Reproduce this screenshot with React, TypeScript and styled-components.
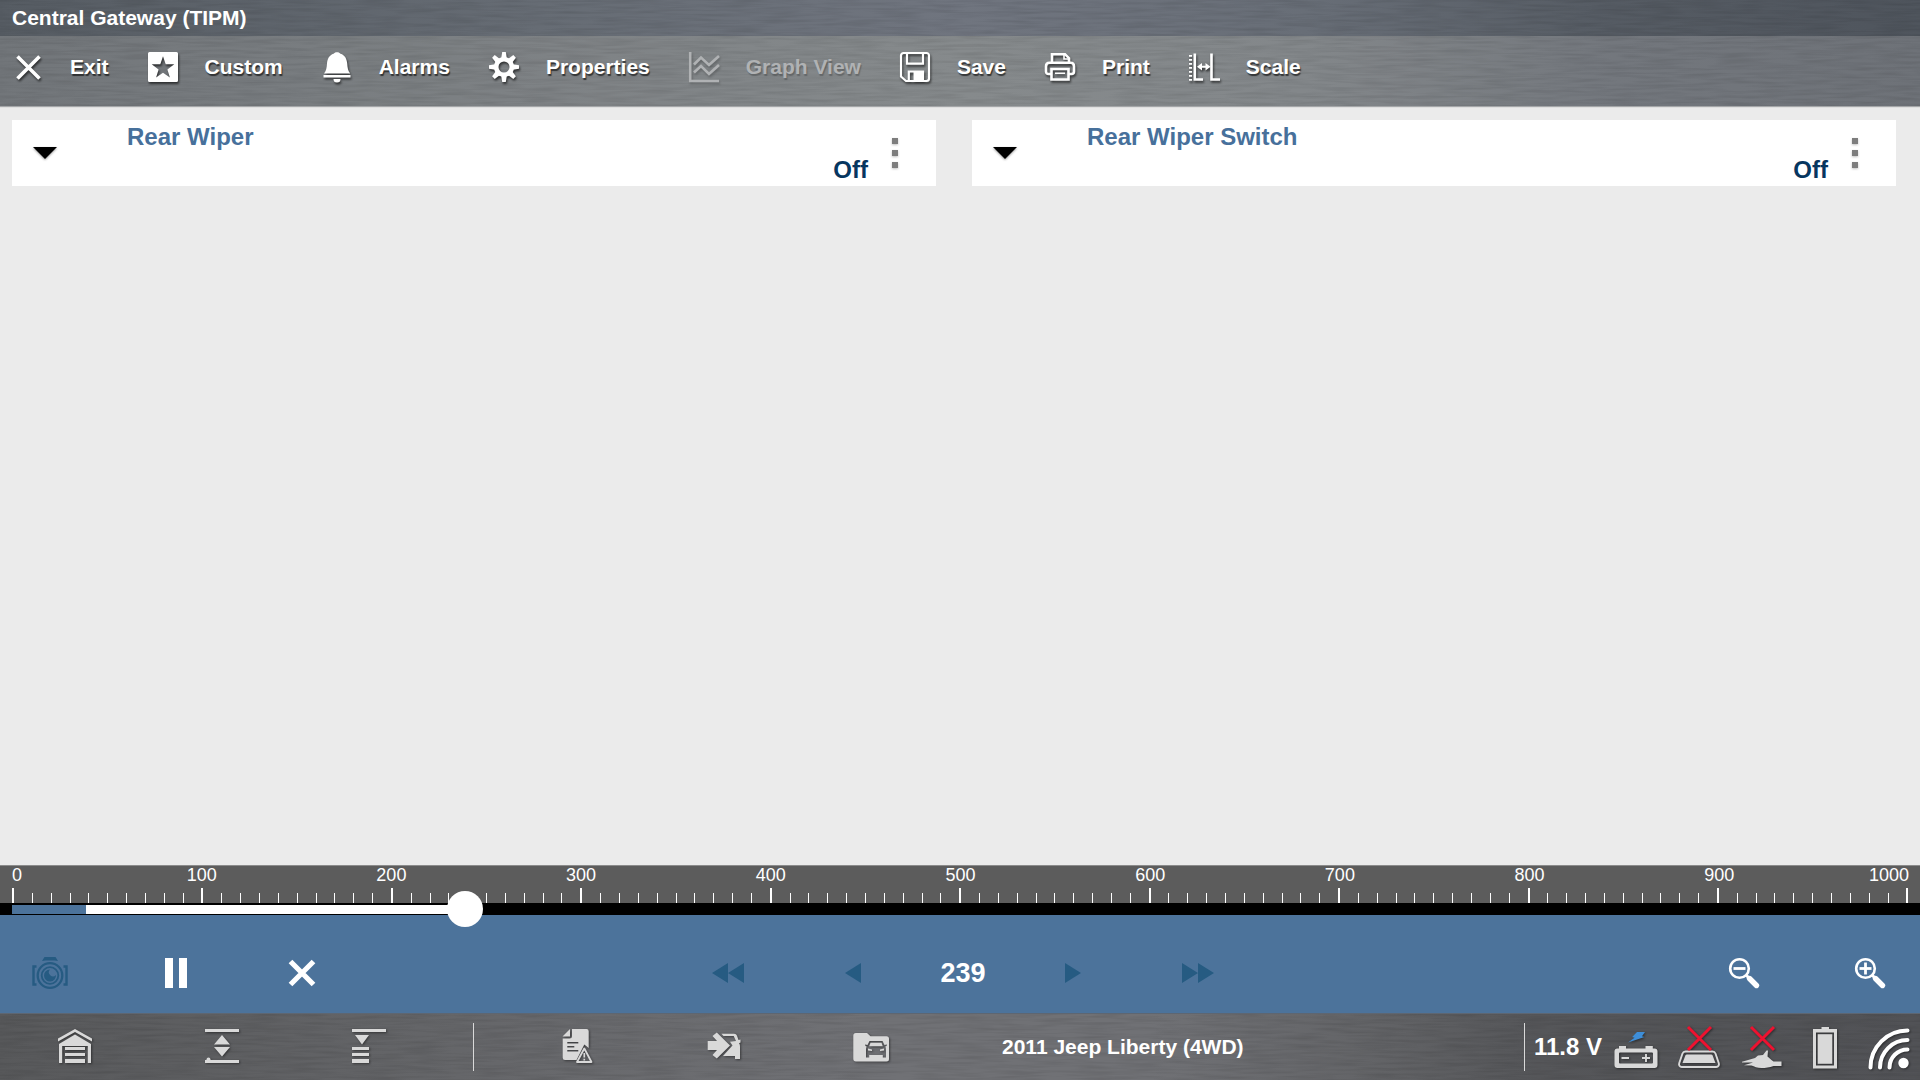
import React, { useState } from "react";
import styled, { createGlobalStyle, css } from "styled-components";

const GlobalStyle = createGlobalStyle`
  *, *::before, *::after { box-sizing: border-box; }
  html, body { margin: 0; padding: 0; }
  body {
    background: #ebebeb;
    font-family: "Liberation Sans", Arial, Helvetica, sans-serif;
    overflow-x: hidden;
  }
  button {
    font: inherit;
    color: inherit;
    background: none;
    border: 0;
    padding: 0;
    margin: 0;
    cursor: pointer;
  }
  svg { display: block; flex: none; overflow: visible; }
`;

const Page = styled.div`
  display: flex;
  flex-direction: column;
  min-height: 100vh;
  overflow: hidden;
`;

/* ---------- brushed metal ---------- */

const Grain = styled.svg`
  position: absolute;
  inset: 0;
  width: 100%;
  height: 100%;
  pointer-events: none;
`;

function Brushed({ id, seed }: { id: string; seed: number }) {
  return (
    <Grain aria-hidden="true">
      <filter id={id} x="0" y="0" width="100%" height="100%">
        <feTurbulence type="fractalNoise" baseFrequency="0.025 0.35" numOctaves={2} seed={seed} />
        <feColorMatrix values="0 0 0 0 0  0 0 0 0 0  0 0 0 0 0  1.6 0 0 0 -0.6" />
      </filter>
      <rect width="100%" height="100%" filter={`url(#${id})`} opacity="0.11" />
    </Grain>
  );
}

/* ---------- header ---------- */

const TitleBar = styled.header`
  position: relative;
  display: flex;
  align-items: center;
  height: 36px;
  padding: 0 12px;
  background: linear-gradient(90deg, #565c63 0%, #666c74 28%, #70757f 50%, #686e77 68%, #555b63 84%, #4f555d 100%);
`;

const Title = styled.h1`
  position: relative;
  margin: 0;
  font-size: 21px;
  line-height: 24px;
  font-weight: bold;
  color: #fff;
`;

const Toolbar = styled.nav`
  position: relative;
  display: flex;
  gap: 39px;
  height: 70px;
  padding: 0 13px 8px;
  background: linear-gradient(90deg, #72767a 0%, #7d8184 26%, #868a8c 50%, #83878a 68%, #73777d 84%, #6e7278 100%);
  box-shadow: 0 1px 1px #a4a6a8;
`;

const Tool = styled.button`
  position: relative;
  display: flex;
  align-items: center;
  gap: 27px;
  font-size: 21px;
  line-height: 24px;
  font-weight: bold;
  color: #fff;
  white-space: nowrap;
  text-shadow: 1px 2px 1px rgba(0, 0, 0, 0.6);
  svg { filter: drop-shadow(1px 2px 1px rgba(0, 0, 0, 0.6)); }
  &:disabled {
    color: #b0b2b4;
    cursor: default;
    text-shadow: 1px 2px 1px rgba(0, 0, 0, 0.22);
    svg { filter: drop-shadow(1px 2px 1px rgba(0, 0, 0, 0.22)); }
  }
`;

/* ---------- parameter panels ---------- */

const Workspace = styled.main`
  flex: 1;
  display: grid;
  grid-template-columns: repeat(2, minmax(0, 1fr));
  align-content: start;
  gap: 36px;
  padding: 14px 24px 14px 12px;
  background: #ebebeb;
`;

const Panel = styled.section`
  display: flex;
  height: 66px;
  padding-right: 14px;
  background: #fff;
`;

const PanelButton = styled.button<{ $width: number }>`
  display: flex;
  align-items: center;
  justify-content: center;
  width: ${(p) => p.$width}px;
`;

const PanelBody = styled.div`
  flex: 1;
  display: flex;
  flex-direction: column;
  padding-left: 49px;
  font-size: 24px;
  line-height: 33px;
  font-weight: bold;
`;

const PanelTitle = styled.h2`
  margin: 0;
  font: inherit;
  color: #47709b;
`;

const PanelValue = styled.span`
  align-self: flex-end;
  color: #07365f;
`;

/* ---------- frame ruler ---------- */

const Ruler = styled.div`
  height: 38px;
  padding: 0 11px 0 12px;
  border-top: 1px solid #8b8b8b;
  background: #5c5c5c;
`;

const RulerLabels = styled.div`
  display: grid;
  grid-template-columns: 1fr repeat(9, 2fr) 1fr;
  font-size: 18px;
  line-height: 18px;
  color: #fff;
  text-align: center;
  span:first-child { text-align: left; }
  span:last-child { text-align: right; }
`;

const Ticks = styled.div`
  display: flex;
  justify-content: space-between;
  align-items: flex-end;
  height: 19px;
`;

const Tick = styled.i<{ $major: boolean }>`
  flex: none;
  width: ${(p) => (p.$major ? 2 : 1)}px;
  height: ${(p) => (p.$major ? 15 : 10)}px;
  background: #fff;
`;

const Rail = styled.div`
  position: relative;
  height: 12px;
  padding: 2px 12px 1px;
  background: #000;
`;

const Recorded = styled.div`
  height: 9px;
  background: #fff;
`;

const Dropped = styled.div`
  height: 9px;
  background: #4c739b;
`;

const thumb = css`
  width: 36px;
  height: 36px;
  border: 0;
  border-radius: 50%;
  background: #fff;
`;

const Slider = styled.input`
  position: absolute;
  z-index: 1;
  top: -12px;
  left: -6px;
  width: calc(100% + 12px);
  height: 36px;
  margin: 0;
  background: none;
  appearance: none;
  -webkit-appearance: none;
  &::-webkit-slider-thumb { -webkit-appearance: none; ${thumb} }
  &::-moz-range-thumb { ${thumb} }
`;

/* ---------- playback ---------- */

const Playback = styled.div`
  display: grid;
  grid-template-columns: 1fr auto 1fr;
  height: 98px;
  padding-top: 18px;
  background: #4c739b;
  color: #fff;
`;

const Cluster = styled.div<{ $align?: string; $gap?: number; $lead?: number }>`
  display: flex;
  align-items: stretch;
  justify-content: ${(p) => p.$align ?? "flex-start"};
  gap: ${(p) => p.$gap ?? 26}px;
  padding-left: ${(p) => p.$lead ?? 0}px;
`;

const PlayButton = styled.button`
  display: flex;
  align-items: center;
  justify-content: center;
  width: 100px;
  &:disabled { color: #265b82; cursor: default; }
`;

const Frame = styled.output`
  align-self: center;
  width: 70px;
  text-align: center;
  font-size: 27px;
  line-height: 30px;
  font-weight: bold;
`;

/* ---------- status bar ---------- */

const StatusBar = styled.footer`
  position: relative;
  display: flex;
  align-items: center;
  height: 67px;
  border-top: 1px solid #5d6672;
  color: #fff;
  font-size: 21px;
  font-weight: bold;
  background: linear-gradient(90deg, #58595b 0%, #646568 22%, #707175 45%, #707175 60%, #626366 72%, #555659 80%, #515256 100%);
`;

const StatusGroup = styled.div<{ $pad?: number; $end?: boolean }>`
  position: relative;
  display: flex;
  align-items: center;
  padding-left: ${(p) => p.$pad ?? 0}px;
  padding-right: ${(p) => (p.$end ? 1 : 0)}px;
  margin-left: ${(p) => (p.$end ? "auto" : "0")};
`;

const StatusButton = styled.button`
  display: flex;
  align-items: center;
  justify-content: center;
  width: 147px;
  height: 66px;
  color: #d9d9d9;
  svg { filter: drop-shadow(1px 1px 1px rgba(0, 0, 0, 0.45)); }
`;

const Divider = styled.span`
  width: 1px;
  height: 48px;
  background: #d9d9d9;
`;

const Vehicle = styled.span`
  margin-left: 58px;
  line-height: 24px;
  white-space: nowrap;
`;

const Voltage = styled.span`
  width: 79px;
  padding-left: 9px;
  font-size: 24px;
  line-height: 28px;
  white-space: nowrap;
`;

const Indicator = styled.span`
  display: flex;
  justify-content: center;
  width: 63px;
  color: #d9d9d9;
  svg { filter: drop-shadow(1px 1px 1px rgba(0, 0, 0, 0.45)); }
`;

/* ---------- icons ---------- */

type IconProps = { w: number; h: number; children: React.ReactNode };

const Icon = ({ w, h, children }: IconProps) => (
  <svg width={w} height={h} viewBox={`0 0 ${w} ${h}`} fill="currentColor" aria-hidden="true">
    {children}
  </svg>
);

const ExitIcon = () => (
  <Icon w={30} h={30}>
    <path d="M4.500 4.500l22 22M26.500 4.500l-22 22" stroke="currentColor" strokeWidth="3.600" />
  </Icon>
);

const CustomIcon = () => (
  <Icon w={30} h={30}>
    <path
      fillRule="evenodd"
      d="M1.500 0h27A1.500 1.500 0 0 1 30 1.500v27a1.500 1.500 0 0 1-1.500 1.500h-27A1.500 1.500 0 0 1 0 28.500v-27A1.500 1.500 0 0 1 1.500 0zM15 4.200l-2.700 8-8.600.1 6.900 5.100-2.500 8.200L15 20.700l6.900 4.900-2.500-8.200 6.900-5.100-8.600-.1z"
    />
  </Icon>
);

const BellIcon = () => (
  <Icon w={30} h={30}>
    <path d="M15 .3c1.700 0 2.800.6 3.500 1.500 4.400 1.300 6.300 5 6.700 9.700.3 4.500.8 7.500 3 9.900H2c2.200-2.400 2.700-5.400 3-9.900.4-4.700 2.300-8.400 6.600-9.700.6-.9 1.700-1.500 3.400-1.500z" />
    <path d="M1.500 23h27v2.600h-27zM11.500 27h7a3.500 3.500 0 0 1-7 0z" />
  </Icon>
);

const GearIcon = () => (
  <Icon w={30} h={30}>
    <circle cx="15" cy="15" r="7.800" fill="none" stroke="currentColor" strokeWidth="4.600" />
    {[0, 45, 90, 135, 180, 225, 270, 315].map((a) => (
      <path key={a} d="M12.200 6 13.200 0h3.600l1 6z" transform={`rotate(${a} 15 15)`} />
    ))}
  </Icon>
);

const GraphIcon = () => (
  <Icon w={30} h={30}>
    <path
      d="M1.200 0v29H30M5 12.500 12 5.500l8 7.500 10-9M5 20.500l7-6.500 8 8 10-9"
      fill="none"
      stroke="currentColor"
      strokeWidth="2.600"
    />
  </Icon>
);

const SaveIcon = () => (
  <Icon w={30} h={30}>
    <path
      d="M3.500 1h23A2.500 2.500 0 0 1 29 3.500v23a2.500 2.500 0 0 1-2.500 2.500H6l-5-4.500v-21A2.500 2.500 0 0 1 3.500 1zM7 1v10.700h16V1M8.800 29v-9.500H23V29"
      fill="none"
      stroke="currentColor"
      strokeWidth="2.200"
    />
    <path d="M13.500 19.500H23V29h-9.500z" />
  </Icon>
);

const PrintIcon = () => (
  <Icon w={30} h={30}>
    <path
      d="M7 10.500V2.200h13l4 4v4.300M6 22H3.500C2 22 1 21 1 19.500v-5c0-2.200 1.500-3.700 3.500-3.700h21c2 0 3.500 1.500 3.500 3.700v5c0 1.500-1 2.500-2.500 2.500H24"
      fill="none"
      stroke="currentColor"
      strokeWidth="2.600"
    />
    <path d="M19 2v5h5" fill="none" stroke="currentColor" strokeWidth="1.600" />
    <path d="M6.500 17h17v10.500h-17z" fill="none" stroke="currentColor" strokeWidth="2.600" />
    <path d="M10 20.500h10v1.500H10z" />
  </Icon>
);

const ScaleIcon = () => (
  <Icon w={30} h={30}>
    <path d="M1.500 3v26" fill="none" stroke="currentColor" strokeWidth="3" strokeDasharray="1.800 2.200" />
    <path d="M5.800 1.500V27.500H14M22.500 1.500V27.500H31" fill="none" stroke="currentColor" strokeWidth="2.600" />
    <path d="M8 14.700l5-3.700v2.700h3.500V11l5 3.700-5 3.700v-2.700H13v2.700z" />
  </Icon>
);

const CaretIcon = () => (
  <Icon w={24} h={12}>
    <path d="M0 0h24L12 12z" fill="#000" style={{ filter: "drop-shadow(0 1px 1px rgba(0,0,0,.4))" }} />
  </Icon>
);

const DotsIcon = () => (
  <Icon w={6} h={30}>
    <path
      d="M0 0h6v6H0zM0 12h6v6H0zM0 24h6v6H0z"
      fill="#7d7d7d"
      style={{ filter: "drop-shadow(0 1px 1px rgba(0,0,0,.25))" }}
    />
  </Icon>
);

const CameraIcon = () => (
  <Icon w={36} h={34}>
    <path d="M10 5 12.500 1h11L26 5l-3.500-.500h-9z" />
    <path d="M4.500 10.500H1.500v18h3M31.500 10.500h3v18h-3" fill="none" stroke="currentColor" strokeWidth="2.400" />
    <circle cx="18" cy="19.500" r="12.300" fill="none" stroke="currentColor" strokeWidth="2.300" />
    <circle cx="18" cy="19.500" r="8.300" fill="none" stroke="currentColor" strokeWidth="1.800" />
    <path d="M18 13.500a4 4 0 0 0 6 5.500A6 6 0 1 1 18 13.500z" />
  </Icon>
);

const PauseIcon = () => (
  <Icon w={22} h={30}>
    <path d="M0 0h8v30H0zM14 0h8v30h-8z" />
  </Icon>
);

const CloseIcon = () => (
  <Icon w={28} h={28}>
    <path d="M2.500 2.500l23 23M25.500 2.500l-23 23" stroke="currentColor" strokeWidth="5.200" />
  </Icon>
);

const RewindIcon = () => (
  <Icon w={32} h={20}>
    <path d="M16 0v20L0 10zM32 0v20L16 10z" />
  </Icon>
);
const BackIcon = () => (
  <Icon w={16} h={20}>
    <path d="M16 0v20L0 10z" />
  </Icon>
);
const NextIcon = () => (
  <Icon w={16} h={20}>
    <path d="M0 0v20l16-10z" />
  </Icon>
);
const ForwardIcon = () => (
  <Icon w={32} h={20}>
    <path d="M0 0v20l16-10zM16 0v20l16-10z" />
  </Icon>
);

const ZoomIcon = ({ plus }: { plus?: boolean }) => (
  <Icon w={30} h={30}>
    <circle cx="10.500" cy="10.500" r="9.300" fill="none" stroke="currentColor" strokeWidth="2.600" />
    <path d="M4.500 10.500h12" stroke="currentColor" strokeWidth="2.800" />
    {plus && <path d="M10.500 4.500v12" stroke="currentColor" strokeWidth="2.800" />}
    <path d="M17 17l3.500 3.500" stroke="currentColor" strokeWidth="3" />
    <path d="M20.500 20.500l7 7" stroke="currentColor" strokeWidth="5.400" strokeLinecap="round" />
  </Icon>
);

const GarageIcon = () => (
  <Icon w={36} h={36}>
    <path d="M1 12.500V9.500L18 0l17 9.500v3L18 3z" />
    <path d="M2 34V15L18 5.500 34 15v19h-3.200V17H5.200v17z" />
    <path d="M8 18h20v3H8zM8 24h20v3H8zM8 30h20v4H8z" />
  </Icon>
);

const ExpandIcon = () => (
  <Icon w={36} h={36}>
    <path d="M1 0h34v3H1zM1 31h34v3H1zM18 6l8 9.500H10zM10 18h16l-8 9.500z" />
    <circle cx="4.500" cy="30.500" r="2" />
  </Icon>
);

const CollapseIcon = () => (
  <Icon w={36} h={36}>
    <path d="M1 0h34v3H1zM4 6h14l-7 9.500zM1 18h17v3H1zM1 24h17v3H1zM1 30h17v4H1z" />
  </Icon>
);

const ReportIcon = () => (
  <Icon w={36} h={36}>
    <path
      fillRule="evenodd"
      d="M13 0h14.500A2.200 2.200 0 0 1 29.700 2.200V19L25.300 15.500 17.500 31H6A2.300 2.300 0 0 1 3.700 28.700V9.500H10.500A2.500 2.500 0 0 0 13 7zM8.300 13v1.500h11V13zM8.300 17v1.500h7V17zM8.300 21v1.500h11V21z"
    />
    <path d="M11 0v7.500H3.500z" />
    <path d="M25.300 19.500l7.200 13.500H18z" fill="none" stroke="currentColor" strokeWidth="1.800" strokeLinejoin="round" />
    <path d="M25.300 24v4.500M25.300 29.700v1.700" stroke="currentColor" strokeWidth="1.700" />
  </Icon>
);

const VehicleInIcon = () => (
  <Icon w={36} h={36}>
    <path d="M1.700 12H11L6.500 7l4.300-3.500L24 16.500 10.800 29.500 6.500 26l4.500-5H1.700z" />
    <path d="M15.500 4.700H28c1.500 0 2.500.8 3 2l1.500 4.300 2-.5v3l-1.500.8c.8 1 1 2 1 3.500V30h-5v-3H17l9.500-10.500-2.500-3.700 6-.8-2.300-5H17.500z" />
  </Icon>
);

const FolderIcon = () => (
  <Icon w={36} h={36}>
    <path
      fillRule="evenodd"
      d="M3 4h11l3.500 3.300H33.500A2.500 2.500 0 0 1 36 9.800V30a2.500 2.500 0 0 1-2.500 2.500H3A2.700 2.700 0 0 1 .3 29.800V6.700A2.700 2.700 0 0 1 3 4zM16.500 12l-2 4-2.500-.5.500 1.500 1.200.5C13 19 13 20 13 22v6.500h3.200V26h13.600v2.500H33V22c0-2 0-3-.7-4.500l1.200-.5.500-1.500-2.500.5-2-4zM17.500 13.800h11l1.300 3.500H16.200zM15 19.500l4 1v1.500l-4-.5zM31 19.500l-4 1v1.500l4-.5z"
    />
  </Icon>
);

const BatteryIcon = () => (
  <Icon w={44} h={44}>
    <path d="M23 7h8l-3 4.300 2.500.6L14 17.500l6.500-4.700-2.300-.8z" fill="#3e8ed8" />
    <path
      fillRule="evenodd"
      d="M5 21h7v2.500h19.500V21h7.300v2.500h1.700a3 3 0 0 1 3 3V40a3 3 0 0 1-3 3h-37a3 3 0 0 1-3-3V26.500a3 3 0 0 1 3-3H5zM6 27.500a1 1 0 0 0-1 1v9a1 1 0 0 0 1 1h32a1 1 0 0 0 1-1v-9a1 1 0 0 0-1-1z"
    />
    <path d="M7.500 33H15M28 33h8M32 29v8" stroke="currentColor" strokeWidth="1.900" />
  </Icon>
);

const RedCross = () => <path d="M11 2l23 23M34 2 11 25" stroke="#ee1230" strokeWidth="3" />;

const TabletOffIcon = () => (
  <Icon w={44} h={44}>
    <path
      d="M8.500 26.500h27c1.500 0 2.500.8 3 2l3.300 9.700c.6 2-.5 3.800-2.500 3.800H4.700c-2 0-3.100-1.800-2.500-3.800L5.500 28.500c.5-1.200 1.500-2 3-2z"
      fill="none"
      stroke="currentColor"
      strokeWidth="1.900"
    />
    <path d="M10 29.500h24c.8 0 1.300.3 1.600 1l2.900 7.500H5.500l2.900-7.500c.3-.7.800-1 1.600-1z" />
    <RedCross />
  </Icon>
);

const ClampOffIcon = () => (
  <Icon w={44} h={44}>
    <path d="M2 36.800 15 33l3-2.500 5-.5 3.500-4.500h1.500l-.5 6 4 3.500 2 1.500h8V41h-8c-4 1.500-8 2-12 2-4.500 0-7-1.500-10-2.500L4 40.300l9-2.800H2z" />
    <RedCross />
  </Icon>
);

const ChargeIcon = () => (
  <Icon w={44} h={44}>
    <path fillRule="evenodd" d="M18.500 2h7.500v2h8v39.500H10V4h8.500zM13 7.500V40.500h18V7.500z" />
    <path d="M14.700 9.200h14.600v29.600H14.700z" />
  </Icon>
);

const SignalIcon = () => (
  <Icon w={44} h={44}>
    <g fill="none" stroke="#fff" strokeWidth="4" strokeLinecap="round">
      <path d="M4.500 42.500A37 37 0 0 1 41.500 5.500" />
      <path d="M14 42.500A27.500 27.500 0 0 1 41.500 15" />
      <path d="M23.500 42.500A18 18 0 0 1 41.500 24.500" />
    </g>
    <circle cx="37.500" cy="38" r="5.200" fill="#fff" />
  </Icon>
);

/* ---------- data ---------- */

const tools = [
  { label: "Exit", icon: <ExitIcon /> },
  { label: "Custom", icon: <CustomIcon /> },
  { label: "Alarms", icon: <BellIcon /> },
  { label: "Properties", icon: <GearIcon /> },
  { label: "Graph View", icon: <GraphIcon />, disabled: true },
  { label: "Save", icon: <SaveIcon /> },
  { label: "Print", icon: <PrintIcon /> },
  { label: "Scale", icon: <ScaleIcon /> },
];

const parameters = [
  { name: "Rear Wiper", value: "Off" },
  { name: "Rear Wiper Switch", value: "Off" },
];

const FRAME_MAX = 1000;
const WINDOW = 200;
const labels = Array.from({ length: 11 }, (_, i) => i * 100);
const ticks = Array.from({ length: 101 }, (_, i) => i);

export default function App() {
  const [frame, setFrame] = useState(239);
  const before = Math.max(0, frame - WINDOW);

  return (
    <Page>
      <GlobalStyle />
      <TitleBar>
        <Brushed id="grain-title" seed={4} />
        <Title>Central Gateway (TIPM)</Title>
      </TitleBar>
      <Toolbar aria-label="Data tools">
        <Brushed id="grain-tools" seed={9} />
        {tools.map((t) => (
          <Tool key={t.label} type="button" disabled={t.disabled}>
            {t.icon}
            {t.label}
          </Tool>
        ))}
      </Toolbar>

      <Workspace>
        {parameters.map((p) => (
          <Panel key={p.name}>
            <PanelButton type="button" $width={66} aria-label={`Expand ${p.name}`}>
              <CaretIcon />
            </PanelButton>
            <PanelBody>
              <PanelTitle>{p.name}</PanelTitle>
              <PanelValue>{p.value}</PanelValue>
            </PanelBody>
            <PanelButton type="button" $width={54} aria-label={`${p.name} options`}>
              <DotsIcon />
            </PanelButton>
          </Panel>
        ))}
      </Workspace>

      <Ruler>
        <RulerLabels>
          {labels.map((n) => (
            <span key={n}>{n}</span>
          ))}
        </RulerLabels>
        <Ticks aria-hidden="true">
          {ticks.map((n) => (
            <Tick key={n} $major={n % 10 === 0} />
          ))}
        </Ticks>
      </Ruler>
      <Rail>
        <Recorded style={{ width: `${(frame / FRAME_MAX) * 100}%` }}>
          <Dropped style={{ width: `${frame ? (before / frame) * 100 : 0}%` }} />
        </Recorded>
        <Slider
          type="range"
          min={0}
          max={FRAME_MAX}
          value={frame}
          aria-label="Frame"
          onChange={(e) => setFrame(Number(e.target.value))}
        />
      </Rail>

      <Playback>
        <Cluster>
          <PlayButton type="button" disabled aria-label="Snapshot"><CameraIcon /></PlayButton>
          <PlayButton type="button" aria-label="Pause"><PauseIcon /></PlayButton>
          <PlayButton type="button" aria-label="Clear"><CloseIcon /></PlayButton>
        </Cluster>
        <Cluster $gap={25} $lead={6}>
          <PlayButton type="button" disabled aria-label="Rewind"><RewindIcon /></PlayButton>
          <PlayButton type="button" disabled aria-label="Previous frame"><BackIcon /></PlayButton>
          <Frame>{frame}</Frame>
          <PlayButton type="button" disabled aria-label="Next frame"><NextIcon /></PlayButton>
          <PlayButton type="button" disabled aria-label="Fast forward"><ForwardIcon /></PlayButton>
        </Cluster>
        <Cluster $align="flex-end">
          <PlayButton type="button" aria-label="Zoom out"><ZoomIcon /></PlayButton>
          <PlayButton type="button" aria-label="Zoom in"><ZoomIcon plus /></PlayButton>
        </Cluster>
      </Playback>

      <StatusBar>
        <Brushed id="grain-status" seed={15} />
        <StatusGroup $pad={1}>
          <StatusButton type="button" aria-label="Home"><GarageIcon /></StatusButton>
          <StatusButton type="button" aria-label="Expand all"><ExpandIcon /></StatusButton>
          <StatusButton type="button" aria-label="Collapse all"><CollapseIcon /></StatusButton>
        </StatusGroup>
        <StatusGroup $pad={31}>
          <Divider />
        </StatusGroup>
        <StatusGroup $pad={29}>
          <StatusButton type="button" aria-label="Code report"><ReportIcon /></StatusButton>
          <StatusButton type="button" aria-label="Select vehicle"><VehicleInIcon /></StatusButton>
          <StatusButton type="button" aria-label="Vehicle files"><FolderIcon /></StatusButton>
          <Vehicle>2011 Jeep Liberty (4WD)</Vehicle>
        </StatusGroup>
        <StatusGroup $end>
          <Divider />
          <Voltage>11.8 V</Voltage>
          <Indicator><BatteryIcon /></Indicator>
          <Indicator><TabletOffIcon /></Indicator>
          <Indicator><ClampOffIcon /></Indicator>
          <Indicator><ChargeIcon /></Indicator>
          <Indicator><SignalIcon /></Indicator>
        </StatusGroup>
      </StatusBar>
    </Page>
  );
}
